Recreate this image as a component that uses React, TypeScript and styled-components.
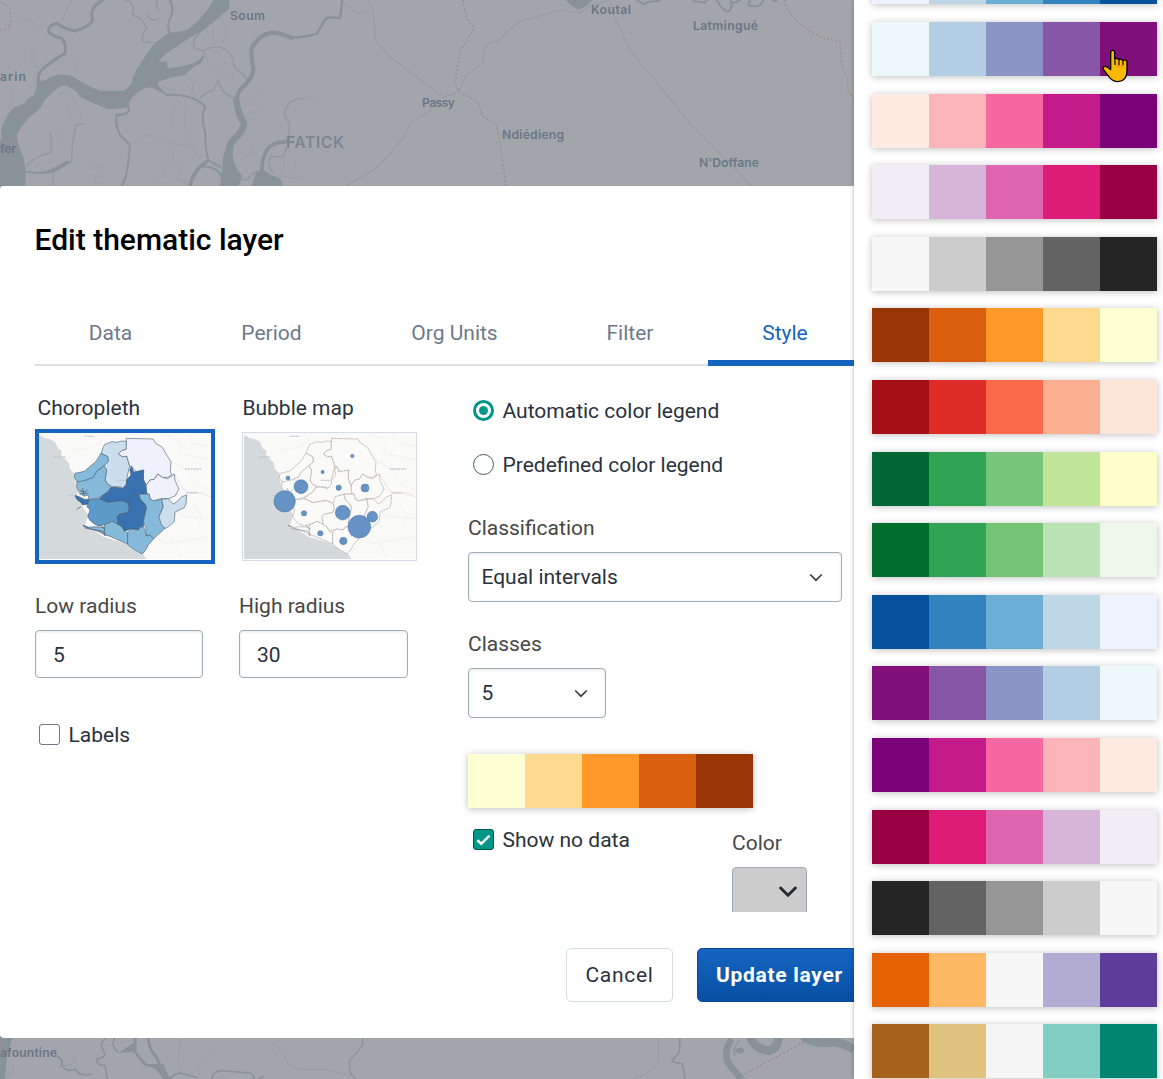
import React from 'react';
import styled, { createGlobalStyle } from 'styled-components';

const GlobalStyle = createGlobalStyle`
  * { box-sizing: border-box; }
  body { margin: 0; font-family: Roboto, "Liberation Sans", sans-serif; background: #fff; }
`;

const Screen = styled.div`
  display: flex;
  position: relative;
  width: 1163px;
  height: 1079px;
  overflow: hidden;
`;

const Workspace = styled.main`
  display: grid;
  grid-template: 1079px / 854px;
  width: 854px;
  flex: none;
  overflow: hidden;
`;

const MapCanvas = styled.svg`
  grid-area: 1 / 1;
  display: block;
  background: #a2a6ab;
  text {
    font-family: Inter, "Open Sans", sans-serif;
    font-weight: 600;
    fill: #6a7786;
  }
`;

const Dialog = styled.section`
  grid-area: 1 / 1;
  margin-top: 186px;
  height: 852px;
  display: flex;
  flex-direction: column;
  background: #fff;
  border-radius: 4px 0 0 4px;
  overflow: hidden;
`;

const Title = styled.h1`
  margin: 0;
  padding: 35px 0 0 34.5px;
  height: 114px;
  font-size: 30px;
  line-height: 38px;
  font-weight: 500;
  color: #000;
`;

const TabBar = styled.nav`
  display: flex;
  flex: none;
  margin-left: 35px;
  width: 900px;
  height: 66px;
  box-shadow: inset 0 -2px 0 #d9dfe5;
`;

const Tab = styled.button<{ $width: number; $active?: boolean }>`
  flex: none;
  width: ${p => p.$width}px;
  padding: 6px 0 0;
  border: 0;
  border-bottom: 6px solid ${p => (p.$active ? '#1565c0' : 'transparent')};
  background: none;
  font: 400 21px/24px Roboto, sans-serif;
  color: ${p => (p.$active ? '#1565c0' : '#6e7a8a')};
`;

const Body = styled.div`
  display: flex;
  flex: none;
  height: 546px;
  padding-left: 35px;
  overflow: hidden;
`;

const LeftColumn = styled.div`
  width: 433px;
  flex: none;
  padding-top: 30px;
`;

const RightColumn = styled.div`
  width: 374px;
  flex: none;
  padding-top: 33px;
`;

const Row = styled.div<{ $gap?: number; $top?: number }>`
  display: flex;
  align-items: flex-start;
  gap: ${p => p.$gap ?? 0}px;
  margin-top: ${p => p.$top ?? 0}px;
`;

const Label = styled.div<{ $dark?: boolean; $indent?: number; $top?: number }>`
  margin-top: ${p => p.$top ?? 0}px;
  padding-left: ${p => p.$indent ?? 0}px;
  font-size: 21px;
  line-height: 24px;
  white-space: nowrap;
  color: ${p => (p.$dark ? '#2a323d' : '#474747')};
`;

const Thumb = styled.div<{ $selected?: boolean }>`
  width: ${p => (p.$selected ? 180 : 175)}px;
  height: ${p => (p.$selected ? 135 : 129)}px;
  margin-top: ${p => (p.$selected ? 9 : 12)}px;
  border: ${p => (p.$selected ? '4px solid #1565c0' : '1px solid #d1dce7')};
  padding-left: ${p => (p.$selected ? 0 : 1)}px;
  svg { display: block; }
`;

const Field = styled.div<{ $width: number }>`
  width: ${p => p.$width}px;
`;

const Box = styled.div<{ $height: number; $width: number; $pad: number; $right?: number; $drop?: number }>`
  display: flex;
  align-items: center;
  justify-content: space-between;
  width: ${p => p.$width}px;
  height: ${p => p.$height}px;
  margin-top: 12px;
  padding: ${p => p.$drop ?? 0}px ${p => p.$right ?? 18}px 0 ${p => p.$pad}px;
  border: 1px solid #a0adba;
  border-radius: 4px;
  box-shadow: inset 0 1px 3px rgba(48, 54, 60, 0.12);
  font-size: 21px;
  line-height: 24px;
  color: #2a323d;
`;

const Choice = styled.label<{ $top?: number; $indent?: number }>`
  display: flex;
  align-items: flex-start;
  gap: 8.5px;
  height: 24px;
  margin-top: ${p => p.$top ?? 0}px;
  padding-left: ${p => p.$indent ?? 5}px;
  font-size: 21px;
  line-height: 24px;
  white-space: nowrap;
  color: #2a323d;
`;

const RadioDot = styled.span<{ $on?: boolean }>`
  display: grid;
  place-items: center;
  margin-top: 1px;
  width: 21px;
  height: 21px;
  border-radius: 50%;
  border: ${p => (p.$on ? '3px solid #009688' : '1.4px solid #4a5768')};
  &::after {
    content: '';
    width: 9px;
    height: 9px;
    border-radius: 50%;
    background: ${p => (p.$on ? '#009688' : 'transparent')};
  }
`;

const CheckBox = styled.span<{ $on?: boolean }>`
  display: grid;
  place-items: center;
  margin-top: 1px;
  width: 21px;
  height: 21px;
  border-radius: 3px;
  border: ${p => (p.$on ? '1.4px solid #00564d' : '1.4px solid #6e7a8a')};
  background: ${p => (p.$on ? '#009688' : '#fff')};
`;

const Scale = styled.div<{ $top?: number }>`
  display: flex;
  flex: none;
  width: 285px;
  height: 54px;
  margin-top: ${p => p.$top ?? 0}px;
  box-shadow: 0 1px 7px rgba(0, 0, 0, 0.26);
`;

const Swatch = styled.span<{ $color: string }>`
  width: 57px;
  background: ${p => p.$color};
`;

const NoDataRow = styled.div`
  display: flex;
  margin-top: 20px;
`;

const NoDataToggle = styled.div`
  width: 264px;
`;

const ColorPicker = styled.div`
  display: flex;
  justify-content: flex-end;
  width: 75px;
  height: 51px;
  margin-top: 12px;
  padding: 18px 9px 0 0;
  border: 1px solid #a0adba;
  border-radius: 4px;
  background: #ccc;
`;

const Footer = styled.footer`
  display: flex;
  flex: none;
  gap: 24px;
  margin-top: 36px;
  padding-left: 566px;
`;

const Button = styled.button<{ $primary?: boolean }>`
  flex: none;
  width: ${p => (p.$primary ? 165 : 107)}px;
  height: 54px;
  padding: 0;
  border: 1px solid ${p => (p.$primary ? '#0d47a1' : '#d5dde5')};
  border-radius: 5px;
  background: ${p => (p.$primary ? 'linear-gradient(180deg, #1565c0 0%, #0650a3 100%)' : '#fff')};
  color: ${p => (p.$primary ? '#fff' : '#2a323d')};
  font: ${p => (p.$primary ? 700 : 400)} 21px/24px Roboto, sans-serif;
  letter-spacing: 0.7px;
`;

const Panel = styled.aside`
  position: relative;
  display: flex;
  flex-direction: column;
  gap: 17.6px;
  width: 309px;
  height: 1079px;
  padding-left: 18px;
  background: #fff;
  box-shadow: 0 0 4px rgba(0, 0, 0, 0.3);
  & > :first-child { margin-top: -49.6px; }
`;

const Pointer = styled.svg`
  position: absolute;
  left: 1101.67px;
  top: 49.33px;
`;

const blues = ['#eff3ff', '#bdd7e7', '#6baed6', '#3182bd', '#08519c'];
const buPu = ['#edf8fb', '#b3cde3', '#8c96c6', '#8856a7', '#810f7c'];
const rdPu = ['#feebe2', '#fbb4b9', '#f768a1', '#c51b8a', '#7a0177'];
const puRd = ['#f1eef6', '#d7b5d8', '#df65b0', '#dd1c77', '#980043'];
const greys = ['#f7f7f7', '#cccccc', '#969696', '#636363', '#252525'];
const ylOrBr = ['#ffffd4', '#fed98e', '#fe9929', '#d95f0e', '#993404'];
const reds = ['#fee5d9', '#fcae91', '#fb6a4a', '#de2d26', '#a50f15'];
const ylGn = ['#ffffcc', '#c2e699', '#78c679', '#31a354', '#006837'];
const greens = ['#edf8e9', '#bae4b3', '#74c476', '#31a354', '#006d2c'];
const puOr = ['#e66101', '#fdb863', '#f7f7f7', '#b2abd2', '#5e3c99'];
const brBG = ['#a6611a', '#dfc27d', '#f5f5f5', '#80cdc1', '#018571'];
const rev = (c: string[]) => [...c].reverse();

const palettes = [
  blues, buPu, rdPu, puRd, greys,
  rev(ylOrBr), rev(reds), rev(ylGn), rev(greens), rev(blues),
  rev(buPu), rev(rdPu), rev(puRd), rev(greys), puOr, brBG,
];

const ColorScale = ({ colors, top }: { colors: string[]; top?: number }) => (
  <Scale $top={top}>
    {colors.map(c => <Swatch key={c} $color={c} />)}
  </Scale>
);

const Chevron = () => (
  <svg width="14" height="9" viewBox="0 0 14 9" fill="none" stroke="#404040" strokeWidth="1.7">
    <path d="M1.2 1.5 7 7.2 12.8 1.5" />
  </svg>
);

const BaseMap = () => (
  <MapCanvas width="854" height="1079" viewBox="0 0 854 1079">
    <g transform="scale(.33333)" fill="none" strokeLinejoin="round" strokeLinecap="round">
      <path fill="#8a9299" d="M640 0 C620 35 600 60 565 88 Q540 97 508 98 Q480 115 458 137 Q440 160 422 190 Q400 220 396 245 Q388 265 370 272 H300 Q255 255 215 227 Q180 218 155 230 Q130 245 118 242 Q106 262 103 285 Q85 290 72 312 Q45 315 30 335 Q15 355 4 385 V415 L0 425 V558 H75 Q80 520 72 480 Q55 440 50 405 Q65 375 92 348 Q118 330 125 318 Q130 300 150 285 Q170 262 190 257 Q225 262 240 290 Q280 310 325 328 Q355 328 385 322 Q388 295 405 285 Q425 265 452 262 Q480 275 510 290 Q475 262 472 250 Q490 235 555 225 Q575 200 600 192 Q618 170 612 148 Q612 180 578 190 Q550 200 505 205 Q498 190 503 185 H475 Q500 155 535 137 Q570 110 600 98 Q640 70 688 25 V0Z" />
      <path fill="#8a9299" d="M1240 0 Q1248 15 1278 29 Q1295 25 1320 0Z" transform="translate(458 0)" />
      <path fill="#8a9299" d="M690 430 Q665 460 668 500 L660 558 H712 Q725 550 725 525 Q700 500 698 460 L702 430Z M755 558 L768 515 Q790 505 812 525 L840 535 850 558Z M78 512 Q120 520 150 510 L200 482 215 487 160 518 Q120 525 78 518Z" />
      <g stroke="#8a9299">
        <path strokeWidth="9" d="M310 0 Q270 20 276 50 Q285 75 225 93 Q200 90 170 70 Q145 75 145 95 Q160 110 185 115 Q200 130 195 160 Q160 180 150 190 Q125 205 116 225 L114 250" />
        <path strokeWidth="7" d="M1027 0 L1020 55 Q990 50 978 55 Q960 85 950 102 Q910 113 875 113" />
        <path strokeWidth="13" d="M875 113 Q840 98 815 98 Q775 105 755 145 Q752 175 760 205 Q760 230 735 255 Q710 275 709 305" />
        <path strokeWidth="20" d="M709 300 Q715 345 732 370 Q730 395 705 415 Q688 430 684 460" />
        <path strokeWidth="6" d="M510 0 Q525 30 508 60 Q498 90 515 100 M385 320 Q395 345 350 345 Q345 375 360 405 L390 435 385 485 378 530 365 558 M616 320 Q600 350 616 400 Q615 450 625 480 L660 500 M600 500 Q650 495 665 530 M500 285 Q575 280 616 320" />
        <path strokeWidth="11" d="M620 485 Q580 510 570 558 M860 425 Q820 425 800 450 Q785 480 785 515" />
      </g>
      <g stroke="#90979d">
        <path strokeWidth="4" d="M375 0 Q410 10 396 45 Q425 50 440 85 Q420 115 430 125 L465 128 M472 0 Q465 15 475 30 M440 45 Q460 70 475 55 M80 500 Q95 480 120 468 L152 458 Q160 420 148 395 M215 485 Q215 430 228 375 L250 372 M600 295 Q620 275 640 270 L655 240 Q665 285 705 295 M600 100 Q570 120 585 145 L610 152 Q640 135 670 145 Q695 150 705 205 Q735 220 740 240 M858 425 Q870 400 868 370 Q845 340 858 325 Q870 295 915 295 M160 518V558 M700 530 L740 540 765 515 M820 520 Q800 500 812 470 L850 470 860 440" />
      </g>
      <g stroke="#979da2" strokeWidth="2.5">
        <path d="M230 305 Q205 275 170 280 M205 365 Q220 350 200 325 L230 305 M228 330 Q250 335 240 355 M390 435 Q430 410 460 400 Q485 430 520 432 L575 435 Q570 460 615 468 M555 300 Q560 350 550 390 L575 430 M510 440 Q525 470 520 490 L545 500 530 540 570 545 M275 485 Q290 520 315 490 M320 510 Q300 540 280 525 L290 555 M640 75 Q635 110 645 140 M665 50 Q685 90 675 120 L650 130 M565 220 Q585 255 575 285 M620 160 Q610 195 650 205 L680 190 M690 160 Q710 200 695 250 M475 250 Q500 275 550 270 M830 470 Q870 480 840 530 L910 535 M870 470 Q900 490 880 520 M740 350 Q760 330 790 325 M740 355 L765 360 M750 430 Q765 460 740 465 M915 295 Q925 280 935 300 L955 290" />
        <path d="M75 150 L100 160 105 200 130 195 M95 150V185 M60 60 Q95 55 105 75 L140 80 M215 195 L230 185 225 220 M510 380 Q530 340 515 325 L540 305 M175 395 Q200 400 175 425 M500 480 L490 530 460 535 M720 480 L770 460 M785 270 L760 300 M650 215 L700 230 M700 290 L760 310 M40 265 L30 325 10 330" strokeDasharray="9 5" />
      </g>
      <path stroke="#8a9299" strokeWidth="6" d="M1910 0 L1930 12 1950 5 1978 2 M2080 3 L2115 8 2120 0 M2150 0 Q2165 28 2182 35 Q2200 30 2192 0 M2195 10 L2220 2 M2250 0 L2245 15 Q2280 28 2290 0 M2315 0 L2330 3" />
      <g stroke="#969ca1" strokeWidth="3.5">
        <path d="M1105 0 Q1125 30 1125 120 L1170 170 1290 262 1330 292 1375 275 1400 225 1448 190 1455 145 Q1470 120 1495 125 L1520 95 1560 65 1680 30 1740 38 1775 15 1830 0 M1830 0 L1842 50 1890 150 1980 260 2070 370 2170 470 2255 558 M1290 332 L1235 365 1205 420 1135 500 1040 558 M1030 10 Q1050 15 1060 35 Q1080 50 1095 30 M215 0 L185 60" />
      </g>
      <g stroke="#a18a8f" strokeWidth="4" strokeDasharray="6 6" strokeLinecap="butt">
        <path d="M0 5 L28 20 32 50 28 85 0 90 M1388 0 L1400 55 1422 85 1380 155 1365 250 1378 275 1432 305 1450 350 1490 375 1508 480 1518 558 M2354 0 Q2360 35 2390 62 Q2430 100 2475 115 L2520 125 2525 195 2542 235 2545 280 2562 292" />
      </g>
    </g>
    <g transform="translate(0 1029) scale(.33333)" fill="none" stroke="#8a9299" strokeLinejoin="round">
      <path fill="#8a9299" stroke="none" d="M0 20H38L20 90 15 150H0Z M355 72 L400 42 V25 H410 V70 L440 105 490 105 510 150 H490 L465 118 430 108 400 68Z" />
      <path strokeWidth="9" d="M445 25 Q445 60 470 85 L498 150" />
      <path strokeWidth="5" d="M345 25 Q330 50 355 70 M505 150 Q535 125 550 135 L590 145 M635 150 Q640 125 665 125 L750 132 Q770 145 755 152 M320 28 Q295 40 310 65 Q325 85 290 90 Q290 110 315 110 L322 150 M165 80 Q190 85 185 110 Q200 130 225 120 Q240 145 275 135 M775 150 L790 142" />
      <path strokeWidth="4" d="M1088 25 V50 L1048 95 1050 130 1065 150" />
      <path stroke="#959ba0" strokeWidth="3" d="M220 80 Q240 90 215 105 L175 115 M38 110 Q50 125 20 140 M805 28 L850 75 865 105 900 122 980 122 1070 145 M1975 28 V95 Q1970 125 1900 150" />
      <path stroke="#959ba0" strokeWidth="3" strokeDasharray="10 5" d="M540 30 L535 100 545 130 M635 60 L590 110 600 140" />
      <path strokeWidth="5" d="M2040 25 L2038 70 2015 97 2048 105 2055 150" />
      <path strokeWidth="20" d="M2195 30 Q2165 75 2190 110 L2225 150" />
      <path strokeWidth="26" d="M2250 22 Q2265 60 2305 65 Q2335 60 2335 22 M2410 22 Q2450 50 2500 38 Q2530 42 2562 62" />
      <path strokeWidth="4" d="M2218 35 Q2195 60 2205 80" />
      <ellipse cx="2220" cy="65" rx="12" ry="8" fill="#8a9299" />
      <path stroke="#a18a8f" strokeWidth="5" strokeDasharray="6 7" d="M2235 135 L2415 37" />
    </g>
    <g fontSize="12.2">
      <text x="230" y="20" textLength="35">Soum</text>
      <text x="0" y="81" textLength="26">arin</text>
      <text x="0" y="153" textLength="16">fer</text>
      <text x="422" y="107" textLength="33">Passy</text>
      <text x="591" y="14" textLength="40">Koutal</text>
      <text x="693" y="30" textLength="65">Latmingué</text>
      <text x="502" y="139" textLength="62">Ndiédieng</text>
      <text x="699" y="167" textLength="60">N'Doffane</text>
      <text x="0" y="1057" textLength="57">afountine</text>
      <text x="286" y="148" fontSize="15.5" textLength="58" style={{ fill: '#7a8591' }}>FATICK</text>
    </g>
  </MapCanvas>
);

const regionShapes: { d: string; fill: string }[] = [
  { fill: '#cadeed', d: 'M238 164 L260 155 275 157 290 153 304 154 304 178 290 182 280 192 292 200 305 198 314 228 306 262 304 290 294 295 284 290 266 291 248 283 240 270 245 240 236 228 250 214 248 200 228 190Z' },
  { fill: '#eff1fd', d: 'M304 145 L384 147 392 160 412 172 425 195 438 215 436 245 440 255 428 262 412 262 398 252 388 268 375 270 364 285 355 268 356 240 335 247 325 235 314 228 305 198 292 200 280 192 290 182 304 178Z' },
  { fill: '#eff1fd', d: 'M364 285 L375 270 388 268 398 252 412 262 428 266 448 252 450 272 462 297 450 318 430 326 410 325 385 333 375 325 372 312 362 311Z' },
  { fill: '#86badb', d: 'M228 190 L248 200 250 214 236 228 215 245 205 262 185 270 170 278 156 276 148 262 150 250 178 244 200 225 212 215Z' },
  { fill: '#86badb', d: 'M156 276 L185 270 205 262 215 245 236 228 245 240 240 270 248 283 258 292 250 305 225 320 215 326 192 328 190 316 175 318 165 310 155 292Z' },
  { fill: '#3870b0', d: 'M258 292 L270 291 294 295 304 282 304 270 318 255 314 240 320 228 326 246 356 240 355 268 362 285 366 311 342 313 325 318 315 330 310 340 290 332 265 335 250 338 222 326 235 315 250 305Z' },
  { fill: '#3870b0', d: 'M150 316 L162 320 178 328 192 328 190 342 172 345 168 338 155 328Z' },
  { fill: '#5b9ac9', d: 'M192 330 L222 326 250 338 265 335 290 332 310 340 313 355 308 368 285 372 276 380 280 404 262 394 240 403 222 408 208 402 196 392 188 380 195 360 186 350Z' },
  { fill: '#3870b0', d: 'M315 320 L342 313 346 328 360 342 365 352 360 374 355 395 356 408 345 412 340 420 320 417 298 424 290 410 280 404 276 380 285 372 308 368 313 355 310 340Z' },
  { fill: '#86badb', d: 'M342 313 L372 312 376 328 385 333 410 328 415 350 402 380 408 390 420 415 398 435 386 446 375 435 364 438 362 412 355 395 360 374 365 352 360 342 346 328Z' },
  { fill: '#cadeed', d: 'M410 328 L430 326 445 342 455 336 470 320 485 315 483 342 478 353 450 366 448 395 428 412 420 415 408 402 402 380 415 350Z' },
  { fill: '#86badb', d: 'M238 405 L262 394 280 404 290 410 298 424 308 428 308 462 285 452 250 437 238 435Z' },
  { fill: '#86badb', d: 'M308 428 L320 417 340 420 345 412 356 410 364 438 375 435 386 446 370 465 362 480 352 492 330 480 308 464Z' },
  { fill: '#86badb', d: 'M174 406 L190 412 210 410 238 412 240 435 222 425 200 418 182 415Z' },
];

const bubbles = [
  [367, 198, 5], [278, 246, 5], [174, 264, 6], [213, 290, 21], [326, 293, 8], [405, 294, 12],
  [164, 334, 32], [222, 370, 8], [338, 368, 22], [427, 380, 16], [388, 410, 34], [271, 430, 8], [340, 453, 11],
];

const ThumbMap = ({ bubbleMap }: { bubbleMap?: boolean }) => (
  <svg width="172" height="126" viewBox="42 129 516 378" fill="none" strokeLinejoin="round">
    <path fill="#fafaf9" d="M42 129H558V507H42Z" />
    <path fill="#d4d9dc" d="M42 135 L60 145 75 148 90 155 98 175 110 182 108 195 118 205 132 220 135 238 148 250 150 275 160 300 155 320 172 350 190 375 180 405 235 440 300 460 350 488 365 507 H42Z" />
    <g stroke="#efebeb" strokeWidth="2">
      <path d="M245 129 L225 160 190 175 140 180 M420 129 L470 165 460 190 558 210 M490 129 L500 160 558 170 M440 215 L490 240 510 280 558 300 M462 297 L520 310 558 320 M450 366 L480 380 558 385 M420 415 L450 460 470 507 M386 446 L430 460 558 440 M500 330 L530 380 520 410" />
      <path stroke="#e8d8da" d="M448 252 L470 290 490 312 530 308 558 322" />
    </g>
    <g stroke={bubbleMap ? '#a79da0' : '#4e5d6b'} strokeWidth={bubbleMap ? 2 : 1.8} strokeDasharray={bubbleMap ? '6 1.5' : undefined}>
      {regionShapes.map(r => <path key={r.d} d={r.d} fill={bubbleMap ? '#fafaf9' : r.fill} />)}
    </g>
    <path stroke="#46515c" strokeWidth="2" d="M165 302 L180 306 188 300 M172 294 L178 316 M162 312 L190 310 M155 358 L168 350 M174 406 L195 416 235 425 240 437 M228 405 L240 420" opacity={bubbleMap ? 0.6 : 1} />
    <g stroke="#bcc3cd" strokeWidth="4" strokeDasharray="3 1.5">
      <path d="M180 139H208 M85 201H122 M480 237H528 M485 308H515 M272 271H300 M128 317H148" />
    </g>
    {bubbleMap && bubbles.map(([x, y, r]) => (
      <circle key={`${x}-${y}`} cx={x} cy={y} r={r} fill="#6593c6" stroke="#48719e" strokeWidth="1.5" />
    ))}
  </svg>
);

const tabs: [string, number][] = [['Data', 151], ['Period', 171], ['Org Units', 195], ['Filter', 156], ['Style', 154]];

export default function App() {
  return (
    <Screen>
      <GlobalStyle />
      <Workspace>
        <BaseMap />
        <Dialog>
          <Title>Edit thematic layer</Title>
          <TabBar>
            {tabs.map(([name, width]) => (
              <Tab key={name} $width={width} $active={name === 'Style'}>{name}</Tab>
            ))}
          </TabBar>
          <Body>
            <LeftColumn>
              <Row $gap={27}>
                <div>
                  <Label $dark $indent={2.5}>Choropleth</Label>
                  <Thumb $selected><ThumbMap /></Thumb>
                </div>
                <div>
                  <Label $dark $indent={0.4}>Bubble map</Label>
                  <Thumb><ThumbMap bubbleMap /></Thumb>
                </div>
              </Row>
              <Row $gap={36} $top={30}>
                <Field $width={168}>
                  <Label>Low radius</Label>
                  <Box $width={168} $height={48} $pad={17} $drop={2}>5</Box>
                </Field>
                <Field $width={169}>
                  <Label>High radius</Label>
                  <Box $width={169} $height={48} $pad={17} $drop={2}>30</Box>
                </Field>
              </Row>
              <Choice $top={45} $indent={4}><CheckBox />Labels</Choice>
            </LeftColumn>
            <RightColumn>
              <Choice><RadioDot $on />Automatic color legend</Choice>
              <Choice $top={30}><RadioDot />Predefined color legend</Choice>
              <Label $top={39}>Classification</Label>
              <Box $width={374} $height={50} $pad={12.4}>Equal intervals<Chevron /></Box>
              <Label $top={30}>Classes</Label>
              <Box $width={138} $height={50} $pad={12.5} $right={17}>5<Chevron /></Box>
              <ColorScale colors={ylOrBr} top={36} />
              <NoDataRow>
                <NoDataToggle>
                  <Choice>
                    <CheckBox $on>
                      <svg width="15" height="12" viewBox="0 0 15 12" fill="none" stroke="#fff" strokeWidth="2.6">
                        <path d="M1.3 6.2 5.2 9.8 13.5 1.6" />
                      </svg>
                    </CheckBox>
                    Show no data
                  </Choice>
                </NoDataToggle>
                <div>
                  <Label $top={3}>Color</Label>
                  <ColorPicker>
                    <svg width="18" height="12" viewBox="0 0 18 12" fill="none" stroke="#212934" strokeWidth="2.9" strokeLinecap="round">
                      <path d="M1.6 2 9 9.2 16.4 2" />
                    </svg>
                  </ColorPicker>
                </div>
              </NoDataRow>
            </RightColumn>
          </Body>
          <Footer>
            <Button>Cancel</Button>
            <Button $primary>Update layer</Button>
          </Footer>
        </Dialog>
      </Workspace>
      <Panel>
        {palettes.map(colors => <ColorScale key={colors.join()} colors={colors} />)}
      </Panel>
      <Pointer width="26.67" height="34" viewBox="755 148 80 102">
        <path
          d="M781 158 Q781 152 787 152 Q793 152 793 158 V177 Q800 174 805 179 Q812 176 817 182 Q824 178 830 185 V214 Q829 245 803 246 Q788 246 778 234 L759 209 Q756 199 766 200 Q774 203 781 210Z"
          fill="#ffb900" stroke="#000" strokeWidth="4" strokeLinejoin="round"
        />
        <path d="M794 177V196 M806 180V197 M818 183V197" stroke="#000" strokeWidth="3.5" />
        <path d="M794 199H820" stroke="#d98c1a" strokeWidth="2" />
      </Pointer>
    </Screen>
  );
}
